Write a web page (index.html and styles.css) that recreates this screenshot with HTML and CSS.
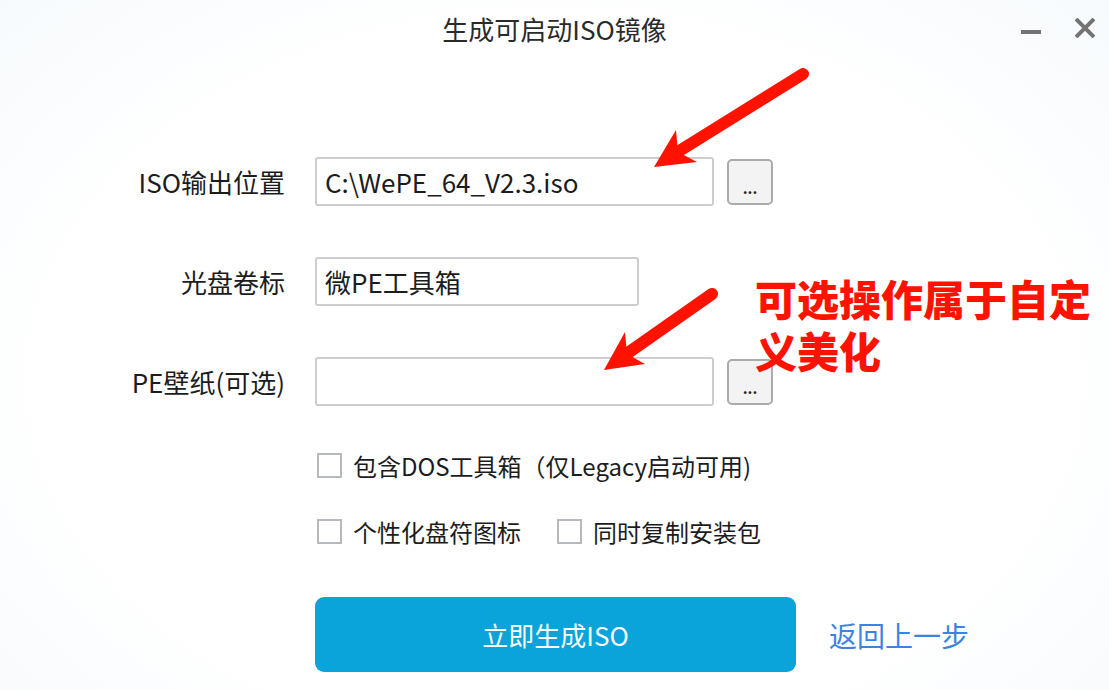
FILE: index.html
```html
<!DOCTYPE html>
<html lang="zh-CN">
<head>
    <meta charset="UTF-8">
    <meta name="viewport" content="width=device-width, initial-scale=1.0">
    <title>生成可启动ISO镜像</title>
    <link rel="stylesheet" href="styles.css">
</head>
<body>
    <div class="window">
        <!-- 标题栏 -->
        <div class="titlebar">
            <span></span>
            <span class="title">生成可启动ISO镜像</span>
            <div class="win-controls">
                <svg class="win-btn" width="20" height="20" viewBox="0 0 20 20">
                    <rect x="0" y="12" width="20" height="4" fill="#737373"/>
                </svg>
                <svg class="win-btn" width="20" height="20" viewBox="0 0 20 20">
                    <path d="M1 1 L19 19 M19 1 L1 19" stroke="#737373" stroke-width="4"/>
                </svg>
            </div>
        </div>

        <!-- 表单 -->
        <form class="form">
            <div class="row">
                <label class="label" for="isoPath">ISO输出位置</label>
                <input class="text wide" type="text" id="isoPath" value="C:\WePE_64_V2.3.iso">
                <button class="browse" type="button">...</button>
            </div>
            <div class="row">
                <label class="label" for="volume">光盘卷标</label>
                <input class="text short" type="text" id="volume" value="微PE工具箱">
            </div>
            <div class="row">
                <label class="label" for="wallpaper">PE壁纸(可选)</label>
                <input class="text wide" type="text" id="wallpaper" value="">
                <button class="browse" type="button">...</button>
            </div>

            <div class="checks">
                <div class="check-row">
                    <label class="check"><input type="checkbox"><span>包含DOS工具箱（仅Legacy启动可用)</span></label>
                </div>
                <div class="check-row">
                    <label class="check"><input type="checkbox"><span>个性化盘符图标</span></label>
                    <label class="check"><input type="checkbox"><span>同时复制安装包</span></label>
                </div>
            </div>

            <div class="actions">
                <button class="primary" type="button">立即生成ISO</button>
                <a class="back" href="#">返回上一步</a>
            </div>
        </form>

        <!-- 标注 -->
        <svg class="arrows" width="1109" height="690" viewBox="0 0 1109 690">
            <line x1="803" y1="74" x2="676" y2="153" stroke="#ff1200" stroke-width="12" stroke-linecap="round"/>
            <polygon points="654,167 676,130 678,152 697,162" fill="#ff1200"/>
            <line x1="712" y1="294" x2="625" y2="355" stroke="#ff1200" stroke-width="12" stroke-linecap="round"/>
            <polygon points="604,370 625,332 627,354 645,364" fill="#ff1200"/>
        </svg>
        <div class="note">
            <div>可选操作属于自定</div>
            <div>义美化</div>
        </div>
    </div>
</body>
</html>
```

FILE: styles.css
```css
body {
    margin: 0;
    font-family: "Noto Sans CJK SC", "Liberation Sans", sans-serif;
    color: #1c1c1c;
}
.window {
    position: relative;
    width: 1109px;
    height: 690px;
    overflow: hidden;
    background: radial-gradient(ellipse 75% 85% at 50% 55%, #ffffff 60%, #f5f9fc 100%);
}
.titlebar {
    height: 56px;
    display: grid;
    grid-template-columns: 1fr auto 1fr;
    align-items: center;
}
.title {
    font-size: 26px;
    color: #2a2a2a;
}
.win-controls {
    display: flex;
    justify-content: flex-end;
    gap: 34px;
    padding-right: 14px;
    margin-top: -1px;
}
.form {
    padding-top: 101px;
}
.row {
    display: flex;
    align-items: center;
    height: 49px;
    margin-bottom: 51px;
}
.label {
    width: 285px;
    margin-right: 30px;
    text-align: right;
    font-size: 26px;
}
.text {
    box-sizing: border-box;
    height: 49px;
    border: 2px solid #cdcdcd;
    border-radius: 3px;
    padding: 0 8px;
    font-family: inherit;
    font-size: 26px;
    color: #1c1c1c;
    background: #fff;
    outline: none;
}
.wide {
    width: 399px;
}
.short {
    width: 324px;
}
.browse {
    box-sizing: border-box;
    width: 46px;
    height: 46px;
    margin-left: 13px;
    background: #f3f3f3;
    border: 2px solid #ababab;
    border-radius: 5px;
    font-family: inherit;
    font-size: 15px;
    font-weight: bold;
    line-height: 1;
    padding: 12px 0 0;
    color: #222;
}
.checks {
    padding-left: 317px;
    margin-top: -4px;
}
.check-row {
    display: flex;
    align-items: center;
    gap: 36px;
    height: 25px;
    margin-bottom: 41px;
}
.check {
    display: flex;
    align-items: center;
    gap: 11px;
    font-size: 24px;
}
.check input {
    appearance: none;
    box-sizing: border-box;
    width: 25px;
    height: 25px;
    margin: 0;
    border: 2px solid #b6b9be;
    background: #fff;
}
.actions {
    display: flex;
    align-items: center;
    padding-left: 315px;
    margin-top: 53px;
}
.primary {
    width: 481px;
    height: 75px;
    border: none;
    border-radius: 9px;
    background: #0aa3da;
    color: #fff;
    font-family: inherit;
    font-size: 26px;
}
.back {
    margin-left: 33px;
    font-size: 28px;
    color: #3b83e2;
    text-decoration: none;
}
.arrows {
    position: absolute;
    left: 0;
    top: 0;
    pointer-events: none;
}
.note {
    position: absolute;
    left: 755px;
    top: 272px;
    font-size: 42px;
    line-height: 52px;
    font-weight: 900;
    color: #ff1200;
}
```
